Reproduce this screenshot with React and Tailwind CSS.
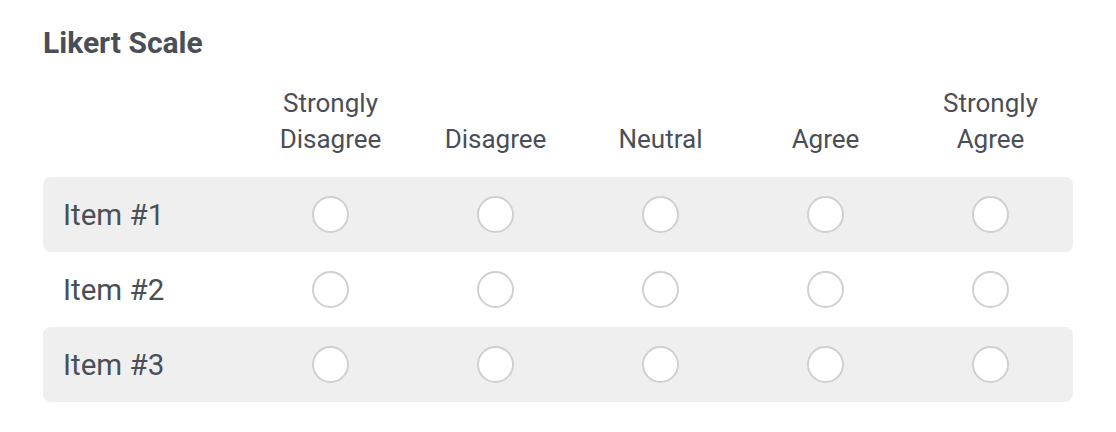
export default function App() {
  const cols = [
    ["Strongly", "Disagree"],
    ["Disagree"],
    ["Neutral"],
    ["Agree"],
    ["Strongly", "Agree"],
  ];
  const items = ["Item #1", "Item #2", "Item #3"];
  return (
    <div
      className="w-[1116px] h-[432px] bg-white pl-[43px] pt-[25px] text-[#4a4f57]"
      style={{ fontFamily: "Roboto, 'Noto Sans', sans-serif" }}
    >
      <div className="text-[30px] leading-[36px] font-bold">Likert Scale</div>
      <div className="mt-[24px] w-[1030px]">
        <div className="grid grid-cols-[205px_repeat(5,165px)] items-end">
          <div />
          {cols.map((c, i) => (
            <div key={i} className="text-center text-[26px] leading-[36px]">
              {c.map((l, j) => (
                <div key={j}>{l}</div>
              ))}
            </div>
          ))}
        </div>
        <div className="mt-[20px]">
          {items.map((it, i) => (
            <div
              key={i}
              className={`grid grid-cols-[205px_repeat(5,165px)] items-center h-[75px] rounded-[8px] ${
                i % 2 === 0 ? "bg-[#efefef]" : "bg-white"
              }`}
            >
              <div className="pl-[20px] text-[29.5px] leading-[36px]">{it}</div>
              {cols.map((_, j) => (
                <div key={j} className="flex justify-center">
                  <div className="w-[37px] h-[37px] rounded-full bg-white border-2 border-[#d0d0d0]" />
                </div>
              ))}
            </div>
          ))}
        </div>
      </div>
    </div>
  );
}
